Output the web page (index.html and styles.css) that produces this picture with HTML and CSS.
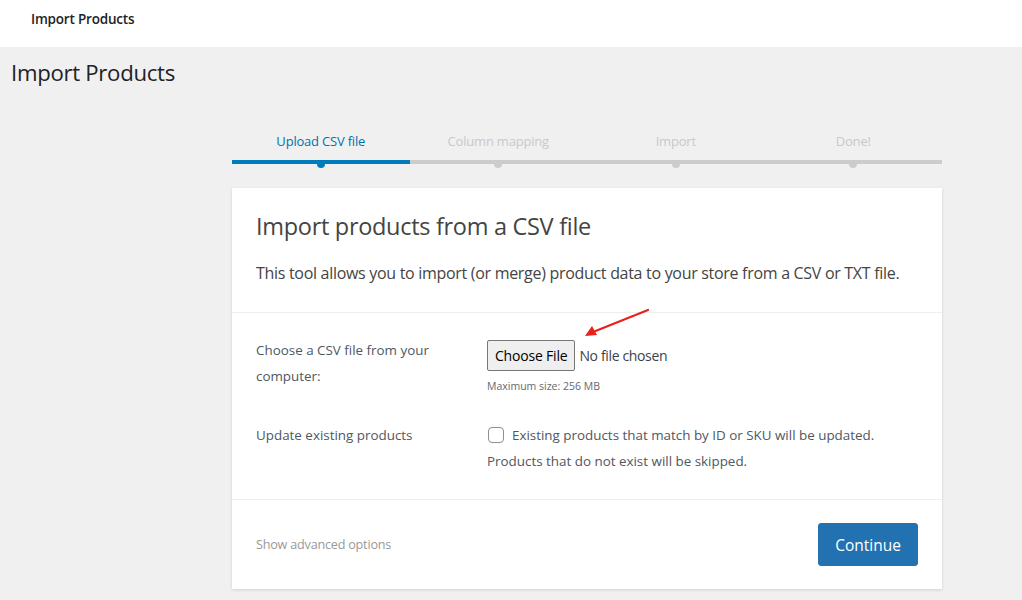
FILE: index.html
```html
<!DOCTYPE html>
<html>
<head>
<meta charset="utf-8">
<link rel="stylesheet" href="styles.css">
</head>
<body>
<header class="topbar"><span class="topbar-title">Import Products</span></header>
<main class="wrap">
  <h1 class="page-title">Import Products</h1>
  <div class="importer">
    <ol class="steps">
      <li class="step active">Upload CSV file</li>
      <li class="step">Column mapping</li>
      <li class="step">Import</li>
      <li class="step">Done!</li>
    </ol>
    <section class="card">
      <div class="card-head">
        <h2 class="card-title">Import products from a CSV file</h2>
        <p class="card-desc">This tool allows you to import (or merge) product data to your store from a CSV or TXT file.</p>
      </div>
      <div class="card-body">
        <div class="row">
          <div class="label">Choose a CSV file from your computer:</div>
          <div class="field">
            <div class="file-line">
              <button class="file-btn" type="button">Choose File</button>
              <span class="file-none">No file chosen</span>
              <svg class="arrow" width="70" height="34" viewBox="0 0 70 34"><line x1="67" y1="2" x2="12" y2="24" stroke="#e8211b" stroke-width="2.2" stroke-linecap="round"/><polygon points="4,28 11,18 16,27" fill="#e8211b"/></svg>
            </div>
            <div class="hint">Maximum size: 256 MB</div>
          </div>
        </div>
        <div class="row row2">
          <div class="label">Update existing products</div>
          <div class="field">
            <label class="check"><span class="box"></span><span>Existing products that match by ID or SKU will be updated.</span></label>
            <div class="check-note">Products that do not exist will be skipped.</div>
          </div>
        </div>
      </div>
      <div class="card-foot">
        <span class="adv">Show advanced options</span>
        <button class="continue" type="button">Continue</button>
      </div>
    </section>
  </div>
</main>
</body>
</html>
```
FILE: styles.css
```css
* { box-sizing: border-box; }
html, body { margin: 0; padding: 0; }
body {
  background: #f0f0f1;
  font-family: "Open Sans", "Noto Sans", sans-serif;
  color: #3c434a;
  width: 1022px;
  height: 600px;
  overflow: hidden;
}
.topbar {
  background: #fff;
  height: 47px;
  padding: 7px 0 0 31px;
}
.topbar-title {
  font-size: 13.5px;
  font-weight: 600;
  color: #1d2327;
  letter-spacing: -0.2px;
}
.wrap { padding: 0 0 0 11px; }
.page-title {
  margin: 0;
  padding-top: 11px;
  font-size: 22.2px;
  font-weight: 400;
  color: #1d2327;
  line-height: 30px;
  letter-spacing: -0.3px;
}
.importer {
  width: 710px;
  margin: 44px 0 0 221px;
}
.steps {
  list-style: none;
  margin: 0;
  padding: 0;
  display: flex;
}
.step {
  flex: 1;
  text-align: center;
  font-size: 13px;
  color: #c9c9c9;
  padding-bottom: 10px;
  border-bottom: 4px solid #ccc;
  position: relative;
  letter-spacing: -0.2px;
  line-height: 18px;
}
.step::after {
  content: "";
  position: absolute;
  left: 50%;
  bottom: -8px;
  width: 8px;
  height: 8px;
  margin-left: -4px;
  border-radius: 50%;
  background: #ccc;
}
.step.active { color: #0073aa; border-color: #007cba; }
.step.active::after { background: #007cba; }
.card {
  margin-top: 24px;
  background: #fff;
  box-shadow: 0 1px 3px rgba(0,0,0,0.13);
}
.card-head {
  padding: 22px 24px 27px;
  border-bottom: 1px solid #eee;
}
.card-title {
  margin: 0;
  font-size: 23.5px;
  font-weight: 400;
  color: #444;
  line-height: 32px;
  letter-spacing: -0.3px;
}
.card-desc {
  margin: 19px 0 0;
  font-size: 16px;
  line-height: 24px;
  color: #444;
  letter-spacing: -0.3px;
}
.card-body {
  padding: 24px 24px 25px;
  border-bottom: 1px solid #eee;
}
.row { display: flex; }
.row2 { margin-top: 29px; }
.label {
  width: 231px;
  padding-right: 40px;
  font-size: 13.4px;
  line-height: 26px;
  color: #50575e;
}
.field { flex: 1; font-size: 13.4px; color: #50575e; }
.file-line { display: flex; align-items: center; position: relative; margin-top: 3px; }
.file-btn {
  font-family: inherit;
  font-size: 14px;
  height: 31px;
  padding: 0 7px;
  border: 1px solid #767676;
  border-radius: 2px;
  background: #efefef;
  color: #000;
  letter-spacing: -0.2px;
}
.file-none { margin-left: 4px; font-size: 14px; color: #3c434a; letter-spacing: -0.35px; }
.arrow { position: absolute; left: 94px; top: -32px; }
.hint { font-size: 10.5px; color: #646970; margin-top: 8px; }
.check { display: flex; align-items: center; line-height: 26px; }
.box {
  width: 16px; height: 16px;
  border: 1px solid #8c8f94;
  border-radius: 4px;
  margin: 0 8px 0 1px;
  background: #fff;
}
.check-note { line-height: 26px; }
.card-foot {
  display: flex;
  align-items: center;
  justify-content: space-between;
  padding: 23px 24px 23px;
}
.adv { font-size: 12.6px; color: #999; letter-spacing: -0.2px; }
.continue {
  font-family: inherit;
  font-size: 15.5px;
  color: #fff;
  background: #2271b1;
  border: 1px solid #2271b1;
  border-radius: 3px;
  width: 100px;
  height: 43px;
}
```
